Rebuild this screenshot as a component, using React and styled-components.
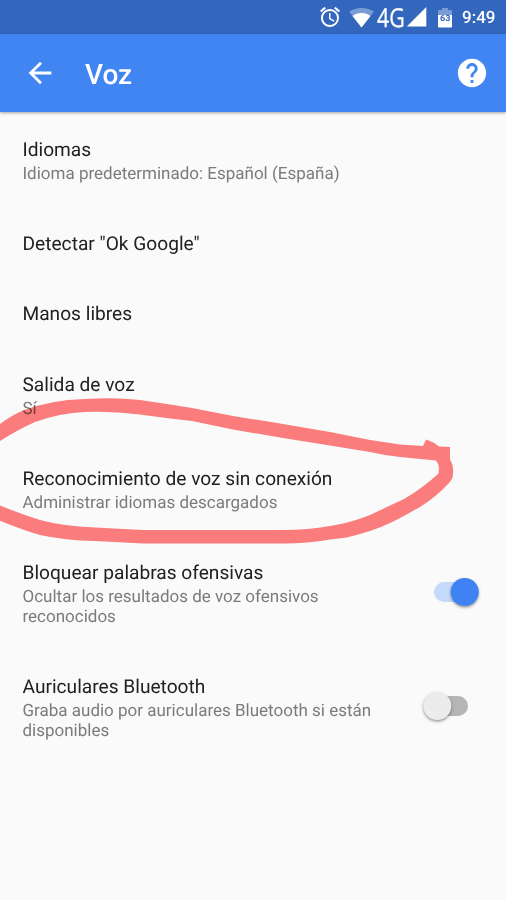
import React from 'react';
import styled, { createGlobalStyle } from 'styled-components';

const settings = [
  { title: 'Idiomas', summary: 'Idioma predeterminado: Español (España)' },
  { title: 'Detectar "Ok Google"' },
  { title: 'Manos libres' },
  { title: 'Salida de voz', summary: 'Sí' },
  {
    title: 'Reconocimiento de voz sin conexión',
    summary: 'Administrar idiomas descargados',
  },
  {
    title: 'Bloquear palabras ofensivas',
    summary: 'Ocultar los resultados de voz ofensivos reconocidos',
    checked: true,
  },
  {
    title: 'Auriculares Bluetooth',
    summary: 'Graba audio por auriculares Bluetooth si están disponibles',
    checked: false,
  },
];

const AlarmIcon = () => (
  <svg width="24" height="24" viewBox="0 0 24 24" fill="#fff">
    <path d="M22 5.72l-4.6-3.86-1.29 1.53 4.6 3.86L22 5.72zM7.88 3.39L6.6 1.86 2 5.71l1.29 1.53 4.59-3.85zM12.5 8H11v6l4.75 2.85.75-1.23-4-2.37V8zM12 4c-4.97 0-9 4.03-9 9s4.02 9 9 9a9 9 0 0 0 0-18zm0 16c-3.87 0-7-3.13-7-7s3.13-7 7-7 7 3.13 7 7-3.13 7-7 7z" />
  </svg>
);

const WifiIcon = () => (
  <svg width="25" height="21" viewBox="0 0 25 21" fill="#fff">
    <path opacity="0.35" d="M12.5 20.5L.2 4.8C3.6 2.2 7.8 1 12.5 1s8.9 1.2 12.3 3.8z" />
    <path d="M12.5 20.5L3.5 9C6 7 9.1 5.9 12.5 5.9s6.5 1.1 9 3.1z" />
  </svg>
);

const SignalIcon = () => (
  <svg width="21" height="22" viewBox="0 0 21 22" fill="#fff">
    <path d="M.8 20.5L20.3 1v19.5z" />
  </svg>
);

const BatteryIcon = () => (
  <svg width="14" height="21" viewBox="0 0 14 21" fill="#fff">
    <path opacity="0.35" d="M4 1h6v2h3a1 1 0 0 1 1 1v4H0V4a1 1 0 0 1 1-1h3z" />
    <path d="M0 8h14v11.5a1 1 0 0 1-1 1H1a1 1 0 0 1-1-1z" />
    <text
      x="2"
      y="14.3"
      fill="#3367be"
      fontFamily="Roboto, sans-serif"
      fontWeight="700"
      fontSize="8.5"
      textLength="10.5"
      lengthAdjust="spacingAndGlyphs"
    >
      63
    </text>
  </svg>
);

const BackIcon = () => (
  <svg width="34" height="34" viewBox="0 0 24 24" fill="#fff">
    <path d="M20 11H7.83l5.59-5.59L12 4l-8 8 8 8 1.41-1.41L7.83 13H20v-2z" />
  </svg>
);

const HelpIcon = () => (
  <svg width="34" height="34" viewBox="0 0 24 24" fill="#fff">
    <path d="M12 2C6.48 2 2 6.48 2 12s4.48 10 10 10 10-4.48 10-10S17.52 2 12 2zm1 17h-2v-2h2v2zm2.07-7.75l-.9.92C13.45 12.9 13 13.5 13 15h-2v-.5c0-1.1.45-2.1 1.17-2.83l1.24-1.26c.37-.36.59-.86.59-1.41 0-1.1-.9-2-2-2s-2 .9-2 2H8c0-2.21 1.79-4 4-4s4 1.790 4 4c0 .88-.36 1.68-.93 2.25z" />
  </svg>
);

// Freehand loop around the offline recognition row
const Scribble = () => (
  <Marker viewBox="0 390 506 160" fill="#ff7e7e" fillRule="evenodd">
    <path
      d="M-4 427 Q10 416 23 410.5 Q50 400 85 399 Q115 397 140 400 L170 404.5 L192 408 L233 416 L283 424 L330 432 L370 440 L400 444.5 L423 446 L426 439.5 Q434 442 439 446.5 L450 447 L450 459 Q454 466 453 474 Q453 479 448 484 Q436 497 420 507 L402 517 Q382 528 360 534 Q348 538 330 539.5 Q308 543.5 283 543.5 H143 L95 541 Q65 540.5 40 535 Q20 529 -4 519 Z
         M-4 443.5 Q17 430 35 422 Q60 413 85 412 Q112 411 140 414.5 L170 418.5 L192 421 L233 429.5 L283 438 L330 445.5 L370 452 Q385 455.5 400 457 L436 460.5 Q439 464 439 468 L438.5 473.5 Q424 487 405 498.5 L370 515 Q350 523 330 526 Q308 530 283 530 H143 L95 527.5 Q62 526 40 520 Q18 513 -4 504 Z"
    />
  </Marker>
);

const Setting = ({ title, summary, checked }) => (
  <Row>
    <Texts>
      <Title>{title}</Title>
      {summary && <Summary>{summary}</Summary>}
    </Texts>
    {checked !== undefined && (
      <Track $on={checked} role="switch" aria-checked={checked}>
        <Thumb $on={checked} />
      </Track>
    )}
  </Row>
);

const App = () => (
  <Screen>
    <GlobalStyle />
    <StatusBar>
      <AlarmIcon />
      <WifiIcon />
      <Network>4G</Network>
      <SignalIcon />
      <BatteryIcon />
      <Clock>9:49</Clock>
    </StatusBar>
    <Toolbar>
      <BackIcon />
      <Heading>Voz</Heading>
      <HelpIcon />
    </Toolbar>
    <List>
      {settings.map((item) => (
        <Setting key={item.title} {...item} />
      ))}
    </List>
    <Scribble />
  </Screen>
);

export default App;

const GlobalStyle = createGlobalStyle`
  * {
    box-sizing: border-box;
  }
  body {
    margin: 0;
    background: #fafafa;
    font-family: Roboto, sans-serif;
    text-rendering: geometricPrecision;
  }
  svg {
    display: block;
    flex-shrink: 0;
  }
`;
const Screen = styled.div`
  position: relative;
  width: 506px;
  height: 900px;
  overflow: hidden;
  background: #fafafa;
`;
const StatusBar = styled.div`
  height: 34px;
  display: flex;
  align-items: center;
  justify-content: flex-end;
  padding-right: 11px;
  background: #3367be;

  svg:nth-of-type(1) {
    margin-right: 7px;
  }
  svg:nth-of-type(2) {
    margin-right: 3px;
  }
  svg:nth-of-type(3) {
    margin-right: 11px;
  }
`;
const Network = styled.span`
  width: 28px;
  margin-right: 1px;
  color: #fff;
  font-family: 'Open Sans', sans-serif;
  font-size: 26px;
  line-height: 34px;
  -webkit-text-stroke: 0.3px #fff;
  transform: scaleX(0.82);
  transform-origin: left;
  white-space: nowrap;
`;
const Clock = styled.span`
  width: 33px;
  margin: 2px 0 0 10px;
  color: #fff;
  font-size: 17px;
  font-weight: 500;
  line-height: 20px;
  white-space: nowrap;
`;
const Toolbar = styled.header`
  height: 78px;
  display: flex;
  align-items: center;
  padding: 0 17px 0 22.5px;
  background: #4185f3;
  box-shadow: 0 1px 3px rgba(0, 0, 0, 0.35);
`;
const Heading = styled.h1`
  flex: 1;
  margin: 4px 0 0 28.5px;
  color: #fff;
  font-size: 28px;
  font-weight: 500;
  line-height: 34px;
`;
const List = styled.main`
  padding-top: 2.2px;
`;
const Row = styled.div`
  display: flex;
  align-items: center;
  justify-content: space-between;
  padding: 23.8px 38.5px 23.8px 22.5px;
`;
const Texts = styled.div`
  width: 360px;
`;
const Title = styled.div`
  color: #212121;
  font-size: 19.15px;
  line-height: 23px;
`;
const Summary = styled.div`
  margin: 4.4px 0 -1px;
  color: #7b7b7b;
  font-size: 17px;
  line-height: 19.9px;
`;
const Track = styled.div`
  display: flex;
  align-items: center;
  justify-content: center;
  width: 33.5px;
  height: 20px;
  margin-bottom: 4px;
  border-radius: 10px;
  background: ${({ $on }) => ($on ? '#c5daf8' : '#b5b5b5')};
`;
const Thumb = styled.div`
  flex-shrink: 0;
  width: 28px;
  height: 28px;
  border-radius: 50%;
  background: ${({ $on }) => ($on ? '#3f82f4' : '#ececec')};
  box-shadow: 0 1.5px 3px rgba(0, 0, 0, 0.4);
  transform: translateX(${({ $on }) => ($on ? '13.7px' : '-13.7px')});
`;
const Marker = styled.svg`
  position: absolute;
  top: 390px;
  left: 0;
  width: 506px;
  height: 160px;
  mix-blend-mode: multiply;
  pointer-events: none;
`;
